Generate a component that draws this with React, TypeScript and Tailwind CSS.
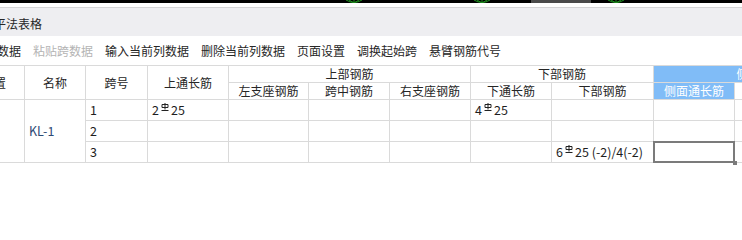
import React from 'react';

const colWidths = [61, 61, 62, 81, 80, 81, 81, 81, 102, 81, 133];

const toolbarItems = [
  { label: '复制跨数据', disabled: false },
  { label: '粘贴跨数据', disabled: true },
  { label: '输入当前列数据', disabled: false },
  { label: '删除当前列数据', disabled: false },
  { label: '页面设置', disabled: false },
  { label: '调换起始跨', disabled: false },
  { label: '悬臂钢筋代号', disabled: false },
];

function Rebar() {
  return (
    <svg width="8" height="8" viewBox="0 0 8 8" className="inline-block align-[4px] mx-[2px]" fill="none" stroke="#222" strokeWidth="1">
      <path d="M1 1.5h6v3h-6z M4 0v6.5 M0.5 7.5h7" />
    </svg>
  );
}

function GreenMark() {
  return (
    <svg width="18" height="3" viewBox="0 0 18 3" fill="none" stroke="#1f8f1f" strokeWidth="1">
      <path d="M1 0 Q9 5 17 0 M9 0v3 M4 0l5 3 5-3" />
    </svg>
  );
}

const th = 'border border-[#dadada] text-center font-normal text-[#262626] p-0 h-[17px] leading-[16px]';
const td = 'border border-[#dadada] text-left text-[#1e1e1e] text-[12.5px] px-[4px] py-0 h-[21px] leading-[20px] whitespace-nowrap';

export default function App() {
  return (
    <div className="w-[742px] h-[240px] overflow-hidden bg-white font-['Noto_Sans_CJK_SC','Microsoft_YaHei',sans-serif] text-[12px]">
      <div className="relative h-[3px] bg-black">
        <div className="absolute left-[345px] top-0"><GreenMark /></div>
        <div className="absolute left-[473px] top-0"><GreenMark /></div>
        <div className="absolute left-[531px] top-0 h-[3px] w-[60px] bg-[#4a4a4a]" />
        <div className="absolute left-[607px] top-0"><GreenMark /></div>
      </div>
      <div className="h-[4px] bg-white" />
      <div className="h-[1px] bg-[#d4d4d6]" />
      <div className="flex h-[28px] items-center bg-[#eeeef1] pt-[3px]">
        <span className="ml-[-6px] text-[#262626]">平法表格</span>
      </div>
      <div className="flex h-[29px] items-center gap-[12px] pt-[1px]">
        {toolbarItems.map((item, i) => (
          <span
            key={item.label}
            className={`${i === 0 ? 'ml-[-39px]' : ''} whitespace-nowrap ${item.disabled ? 'text-[#b4b4b4]' : 'text-[#262626]'}`}
          >
            {item.label}
          </span>
        ))}
      </div>
      <div className="ml-[-37px]">
        <table className="table-fixed border-collapse w-[904px]">
          <colgroup>
            {colWidths.map((w, i) => (
              <col key={i} style={{ width: w }} />
            ))}
          </colgroup>
          <thead>
            <tr>
              <th rowSpan={2} className={th}>位置</th>
              <th rowSpan={2} className={th}>名称</th>
              <th rowSpan={2} className={th}>跨号</th>
              <th rowSpan={2} className={th}>上通长筋</th>
              <th colSpan={3} className={th}>上部钢筋</th>
              <th colSpan={2} className={th}>下部钢筋</th>
              <th colSpan={2} className={`${th} bg-[#80bcf7] text-white`}>侧面钢筋</th>
            </tr>
            <tr>
              <th className={th}>左支座钢筋</th>
              <th className={th}>跨中钢筋</th>
              <th className={th}>右支座钢筋</th>
              <th className={th}>下通长筋</th>
              <th className={th}>下部钢筋</th>
              <th className={`${th} bg-[#80bcf7] text-white`}>侧面通长筋</th>
              <th className={th}>侧面原位标注筋</th>
            </tr>
          </thead>
          <tbody>
            <tr>
              <td rowSpan={3} className={td}></td>
              <td rowSpan={3} className={`${td} text-[#2d4a74]`}>KL-1</td>
              <td className={td}>1</td>
              <td className={td}>2<Rebar />25</td>
              <td className={td}></td>
              <td className={td}></td>
              <td className={td}></td>
              <td className={td}>4<Rebar />25</td>
              <td className={td}></td>
              <td className={td}></td>
              <td className={td}></td>
            </tr>
            <tr>
              <td className={td}>2</td>
              <td className={td}></td>
              <td className={td}></td>
              <td className={td}></td>
              <td className={td}></td>
              <td className={td}></td>
              <td className={td}></td>
              <td className={td}></td>
              <td className={td}></td>
            </tr>
            <tr>
              <td className={td}>3</td>
              <td className={td}></td>
              <td className={td}></td>
              <td className={td}></td>
              <td className={td}></td>
              <td className={td}></td>
              <td className={td}>6<Rebar />25 (-2)/4(-2)</td>
              <td className={`${td} relative`}>
                <div className="absolute inset-[-1px] border-2 border-[#7b7b7b]" />
                <div className="absolute right-[-3px] bottom-[-3px] h-[4px] w-[4px] bg-[#7b7b7b]" />
              </td>
              <td className={td}></td>
            </tr>
          </tbody>
        </table>
      </div>
    </div>
  );
}
